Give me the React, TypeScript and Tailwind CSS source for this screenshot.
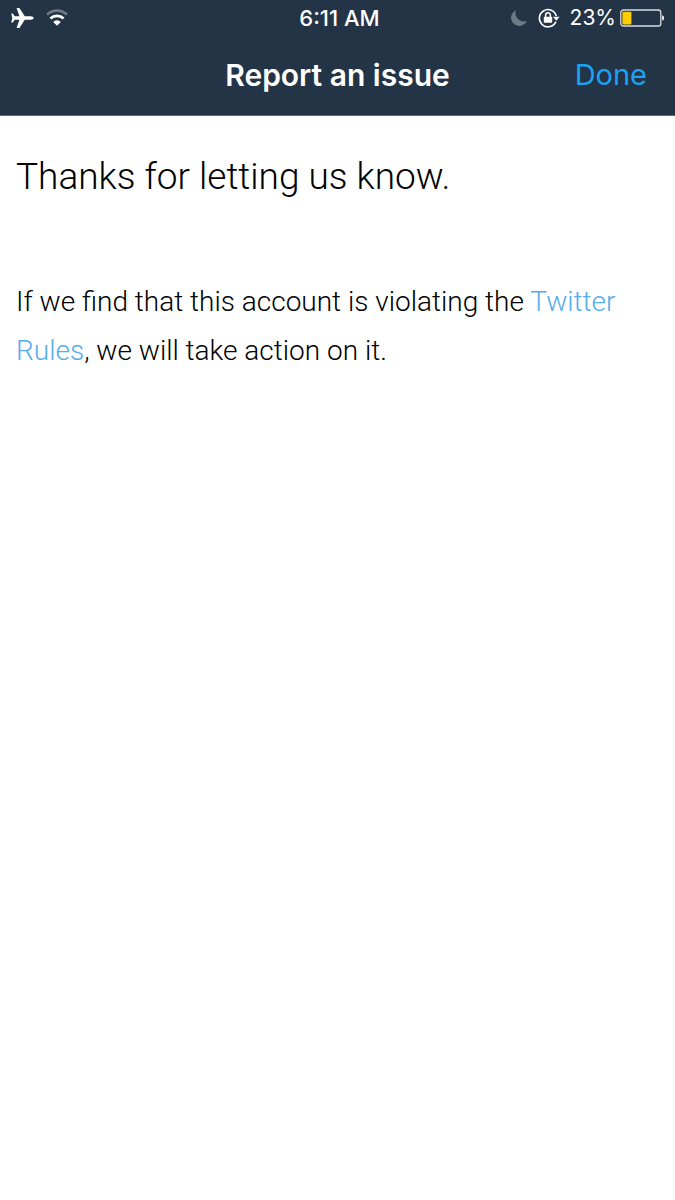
function StatusBar() {
  return (
    <div className="grid h-9 grid-cols-[1fr_auto_1fr] items-center pr-2.5 pl-2.5 text-[22px] leading-9 font-medium">
      <div className="flex items-center gap-3">
        <svg width="24" height="22" viewBox="0 0 24 22" fill="currentColor" role="img" aria-label="Airplane mode">
          <path d="M23.6 11c0-1-1.3-1.7-2.8-1.7h-6L9.4 1H6.6l2.8 8.3H4.8L2.7 6.6H1.2L2.3 11l-1.1 4.4h1.5l2.1-2.7h4.6L6.6 21h2.8l5.4-8.3h6c1.5 0 2.8-.7 2.8-1.7z" />
        </svg>
        <svg width="22" height="18" viewBox="0 0 22 18" fill="none" role="img" aria-label="Wi-Fi">
          <path d="M1 5.6a14.6 14.6 0 0 1 20 0" stroke="#6c7986" strokeWidth="2.6" />
          <path d="M4.4 9.6a9.6 9.6 0 0 1 13.2 0" stroke="#fff" strokeWidth="2.8" />
          <path d="M11 16.8 7.2 12.9a5.4 5.4 0 0 1 7.6 0z" fill="#fff" />
        </svg>
      </div>
      <time className="pl-1 text-center whitespace-nowrap">6:11 AM</time>
      <div className="flex items-center justify-end">
        <svg width="18" height="18" viewBox="0 0 18 18" className="mr-2.5 shrink-0" role="img" aria-label="Do not disturb">
          <path d="M6 1.2a8.2 8.2 0 1 0 10.9 10.6A8.3 8.3 0 0 1 6 1.2z" fill="#6c7986" />
        </svg>
        <svg width="22" height="20" viewBox="0 0 22 20" className="mr-2.5 shrink-0" fill="none" role="img" aria-label="Rotation lock">
          <path d="M17.9 13.6A8.6 8.6 0 1 1 18.3 8" stroke="#fff" strokeWidth="1.6" />
          <path d="M15 8.8h6.6l-3.3 4z" fill="#fff" />
          <rect x="5.8" y="8.8" width="8.4" height="6" rx=".8" fill="#fff" />
          <path d="M7.6 9V7.2a2.4 2.4 0 0 1 4.8 0V9" stroke="#fff" strokeWidth="1.5" />
        </svg>
        <span className="mr-1 text-[21px] font-normal">23%</span>
        <svg width="45" height="18" viewBox="1 0 45 18" className="shrink-0" fill="none" role="img" aria-label="Battery">
          <rect x="1.8" y="1" width="40" height="16" rx="2.6" stroke="#d5dae0" strokeWidth="1.3" />
          <rect x="3.4" y="2.8" width="9" height="12.6" rx=".8" fill="#ffcc00" />
          <path d="M43.2 6.2c1.3.4 1.8 1.5 1.8 2.8s-.5 2.4-1.8 2.8z" fill="#fff" />
        </svg>
      </div>
    </div>
  );
}

export default function App() {
  return (
    <div className="min-h-screen bg-white font-['Inter',sans-serif] text-black">
      <header className="border-b border-[#5a6876] bg-[#243447] text-white">
        <StatusBar />
        <div className="grid h-[79px] grid-cols-[1fr_auto_1fr] items-center px-7 pb-0.5">
          <h1 className="col-start-2 text-[30px] leading-9 font-semibold">Report an issue</h1>
          <button type="button" className="justify-self-end text-[29px] leading-9 text-[#1da1f2]">
            Done
          </button>
        </div>
      </header>
      <main className="px-4 pt-9 font-['Roboto',sans-serif] font-light">
        <h2 className="text-[37px] leading-[49px]">Thanks for letting us know.</h2>
        <p className="mt-19 text-[28px] leading-[49px]">
          If we find that this account is violating the{" "}
          <a href="#rules" className="text-[#55acee]">
            Twitter Rules
          </a>
          , we will take action on it.
        </p>
      </main>
    </div>
  );
}
